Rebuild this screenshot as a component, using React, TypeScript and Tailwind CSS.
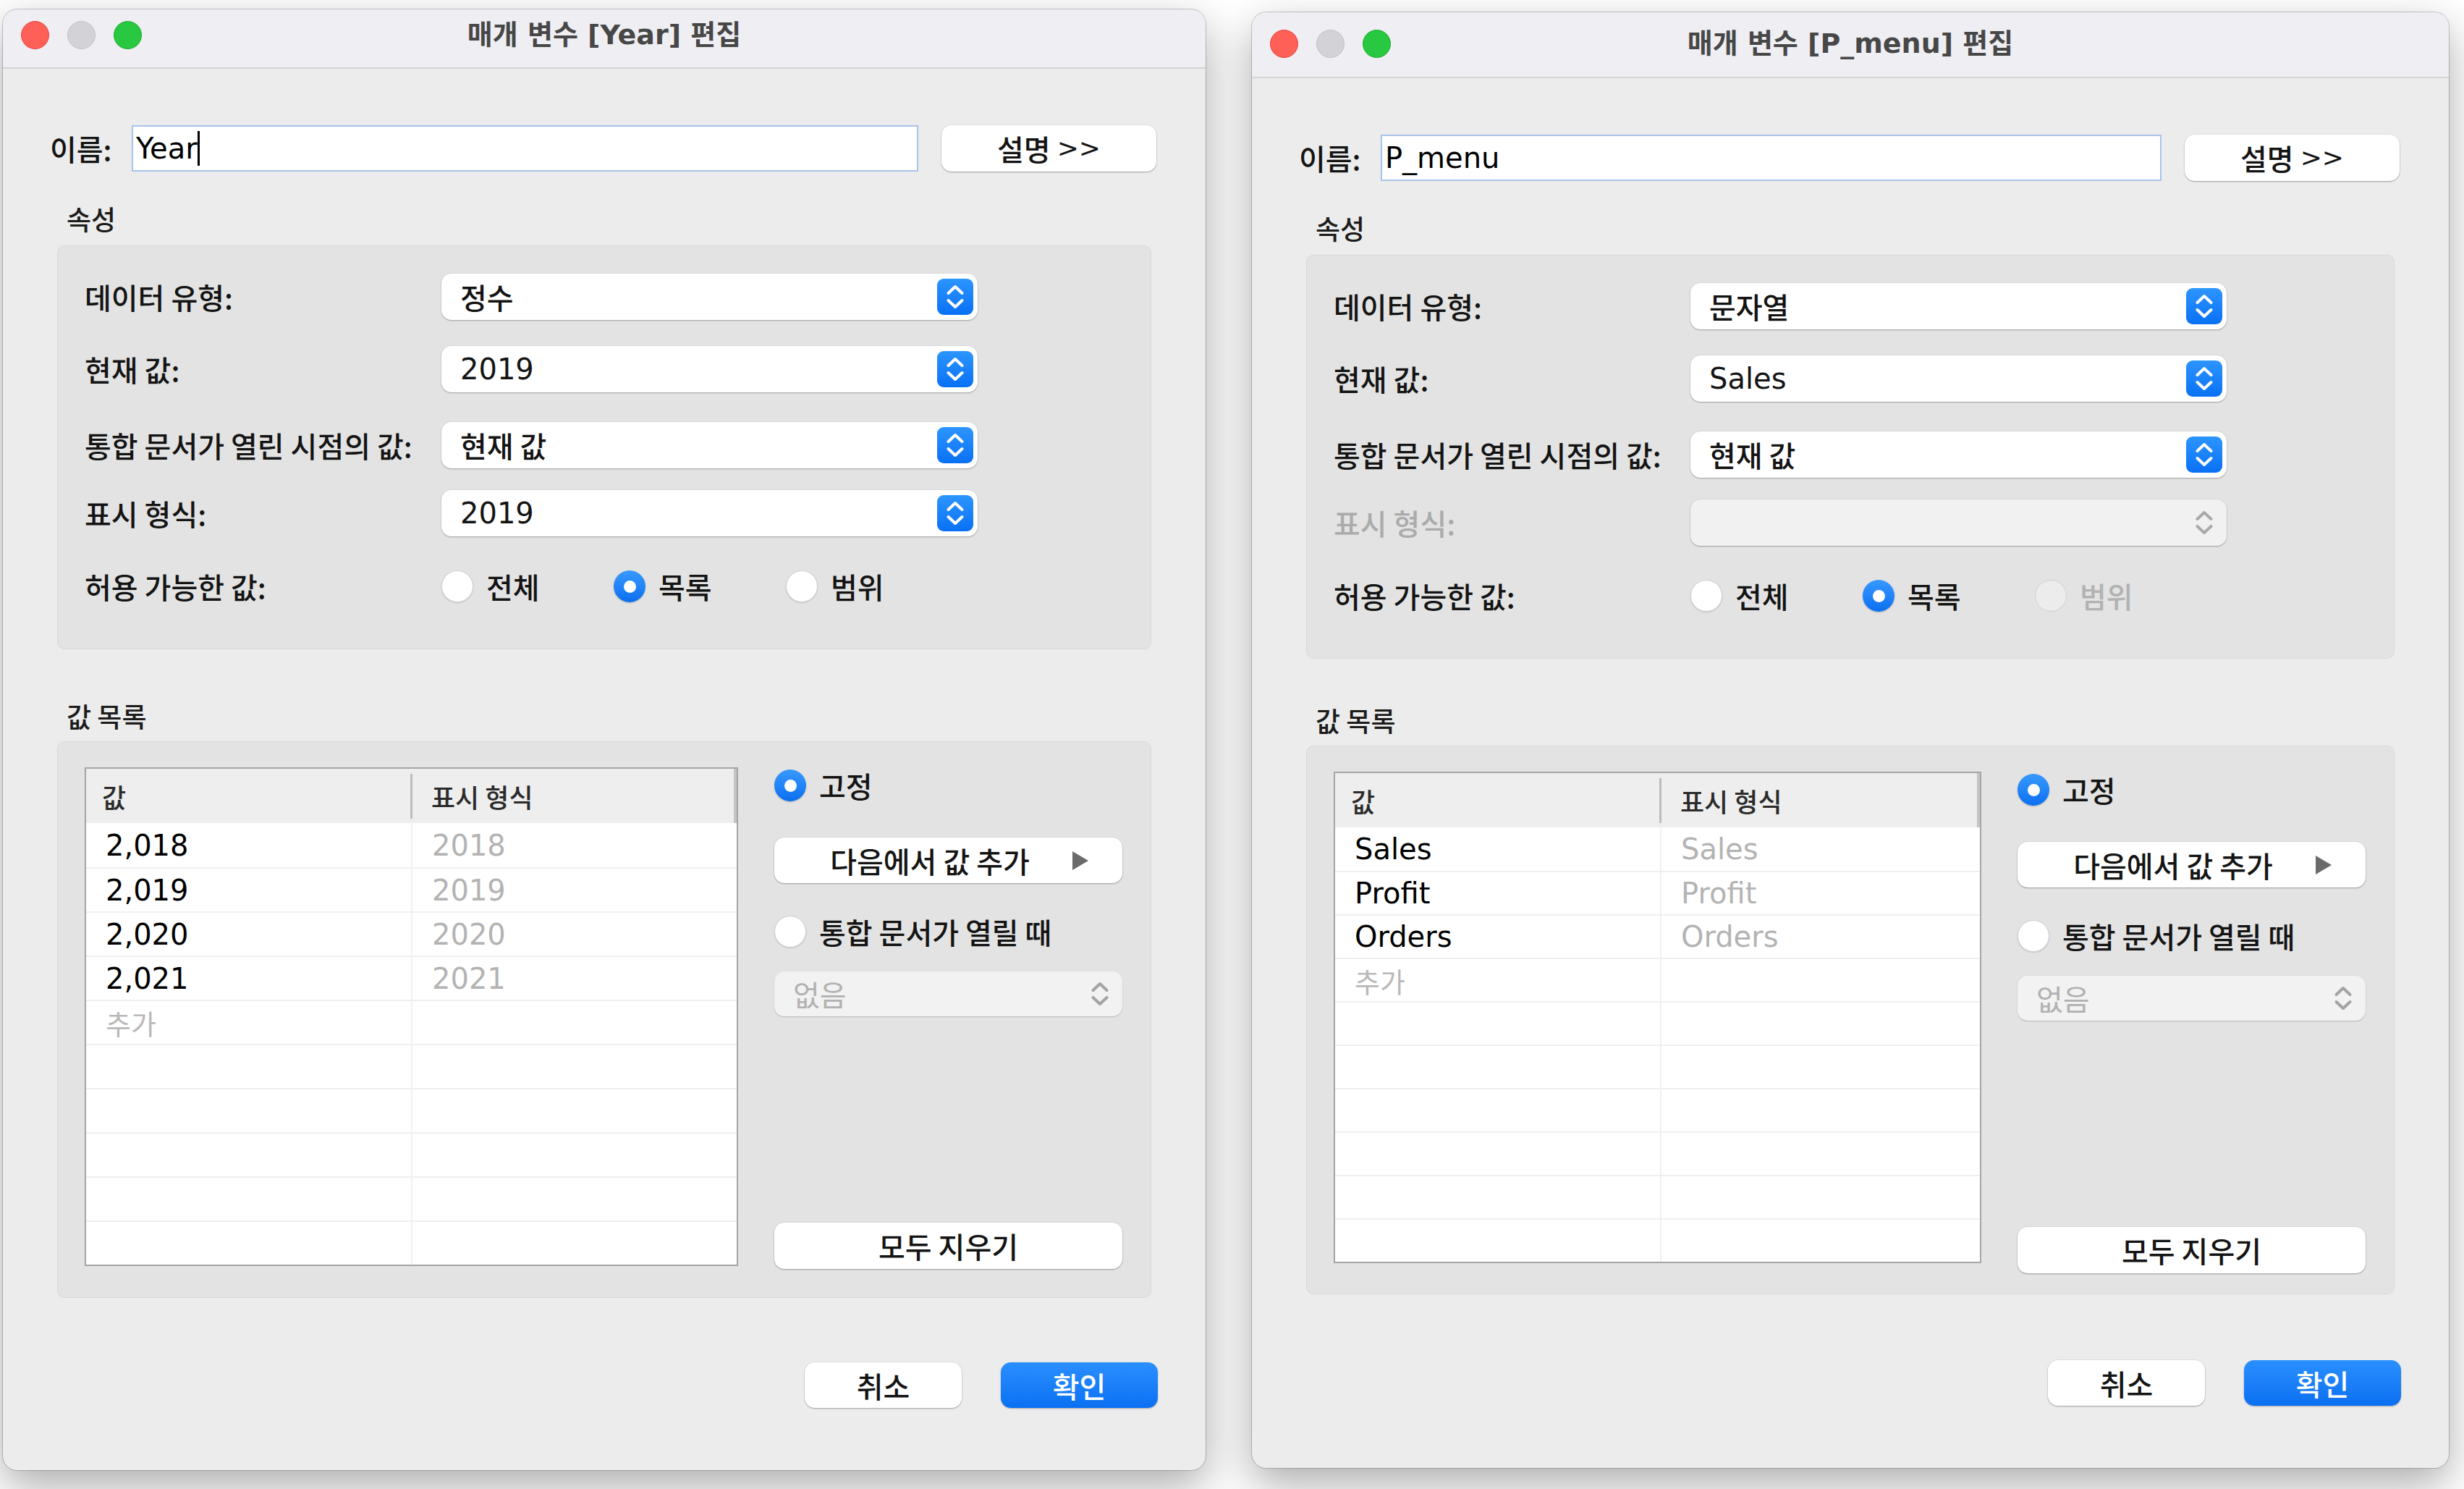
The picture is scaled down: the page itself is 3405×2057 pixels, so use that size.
import React from 'react';

const ko = "font-['Noto_Sans_CJK_KR',sans-serif]";
const en = "font-['DejaVu_Sans','Noto_Sans_CJK_KR',sans-serif]";

type DialogProps = {
  title: string;
  name: string;
  cursor?: boolean;
  dataType: string;
  current: string;
  currentLatin?: boolean;
  format?: string;
  rows: [string, string][];
  rangeDisabled?: boolean;
  winCls: string;
  titleCls: string;
  group2Cls: string;
  rowCls: string;
  listMt: string;
};

function Chevrons({ color }: { color: string }) {
  return (
    <svg width="50" height="50" viewBox="0 0 50 50">
      <path
        d="M15.5 20 L25 11 L34.5 20 M15.5 30 L25 39 L34.5 30"
        fill="none"
        stroke={color}
        strokeWidth="4"
        strokeLinecap="round"
        strokeLinejoin="round"
      />
    </svg>
  );
}

function Stepper({ disabled }: { disabled?: boolean }) {
  if (disabled) {
    return (
      <div className="w-[50px] h-[50px] mr-[6px] flex items-center justify-center">
        <Chevrons color="#a9a9a9" />
      </div>
    );
  }
  return (
    <div className="w-[50px] h-[50px] mr-[6px] rounded-[9px] bg-linear-to-b from-[#2c95ff] to-[#0870f4] flex items-center justify-center">
      <Chevrons color="#ffffff" />
    </div>
  );
}

function Select({ value, latin, disabled }: { value?: string; latin?: boolean; disabled?: boolean }) {
  return (
    <div
      className={`h-[64px] w-[741px] rounded-[14px] flex items-center justify-between pl-[26px] shadow-[0_1px_2px_rgba(0,0,0,0.28),0_0_0_1px_rgba(0,0,0,0.03)] ${
        disabled ? 'bg-[#f1f1f1]' : 'bg-white'
      }`}
    >
      <span className={`${latin ? `${en} text-[40px]` : `${ko} text-[40px] font-medium`} text-[#141414] leading-none`}>{value}</span>
      <Stepper disabled={disabled} />
    </div>
  );
}

function Radio({ checked, disabled }: { checked?: boolean; disabled?: boolean }) {
  if (checked) {
    return (
      <div className="w-[44px] h-[44px] shrink-0 rounded-full bg-linear-to-b from-[#3799ff] to-[#0a6ff0] flex items-center justify-center shadow-[0_1px_2px_rgba(0,0,0,0.25)]">
        <div className="w-[17px] h-[17px] rounded-full bg-white" />
      </div>
    );
  }
  return (
    <div
      className={`w-[44px] h-[44px] shrink-0 rounded-full border border-[#d2d2d2] ${
        disabled ? 'bg-[#ececec]' : 'bg-white shadow-[0_1px_2px_rgba(0,0,0,0.15)]'
      }`}
    />
  );
}

function Btn({ children, className = '' }: { children: React.ReactNode; className?: string }) {
  return (
    <div
      className={`rounded-[14px] bg-white shadow-[0_1px_2px_rgba(0,0,0,0.3),0_0_0_1px_rgba(0,0,0,0.04)] flex items-center ${ko} text-[40px] font-medium text-[#141414] ${className}`}
    >
      {children}
    </div>
  );
}

function Option({ label, checked, disabled }: { label: string; checked?: boolean; disabled?: boolean }) {
  return (
    <div className="w-[238px] flex items-center gap-[18px]">
      <Radio checked={checked} disabled={disabled} />
      <span className={`${ko} text-[40px] font-medium ${disabled ? 'text-[#b2b2b2]' : 'text-[#141414]'}`}>{label}</span>
    </div>
  );
}

function Dialog(p: DialogProps) {
  const body = [...p.rows.map((r) => ({ v: r[0], f: r[1], add: false })), { v: '추가', f: '', add: true }];
  while (body.length < 10) body.push({ v: '', f: '', add: false });

  const label = `${ko} text-[40px] font-medium text-[#141414] w-[493px] shrink-0`;

  return (
    <div
      className={`${p.winCls} shrink-0 rounded-[20px] bg-[#ececec] flex flex-col overflow-hidden shadow-[0_22px_60px_rgba(0,0,0,0.33),0_0_0_1px_rgba(0,0,0,0.2)]`}
    >
      {/* title bar */}
      <div className={`${p.titleCls} shrink-0 bg-[#efeef3] border-b-2 border-[#d3d3d6] grid grid-cols-[1fr_auto_1fr] items-center`}>
        <div className="flex items-center gap-[25px] pl-[25px]">
          <div className="w-[39px] h-[39px] rounded-full bg-[#fe5f57] border border-[#e1443e]" />
          <div className="w-[39px] h-[39px] rounded-full bg-[#d3d2d7] border border-[#c2c1c6]" />
          <div className="w-[39px] h-[39px] rounded-full bg-[#28c840] border border-[#1eab2c]" />
        </div>
        <span className={`${en} font-bold text-[38px] text-[#474747]`}>{p.title}</span>
        <div />
      </div>

      <div className="flex-1 flex flex-col pb-[86px]">
        {/* name row */}
        <div className="flex items-center h-[64px] mt-[78px] ml-[65px] mr-[68px]">
          <span className={`${ko} text-[40px] font-medium text-[#141414] w-[113px] shrink-0`}>이름:</span>
          <div className="flex-1 h-full bg-white border-2 border-[#a8c3ec] flex items-center pl-[4px]">
            <span className={`${en} text-[40px] text-black`}>{p.name}</span>
            {p.cursor && <span className="w-[3px] h-[48px] bg-black" />}
          </div>
          <Btn className="w-[297px] h-[64px] ml-[32px] justify-center shrink-0">
            설명&nbsp;<span className={`${en} text-[36px]`}>&gt;&gt;</span>
          </Btn>
        </div>

        {/* properties */}
        <div className={`mt-[48px] h-[36px] ml-[88px] flex items-center ${ko} text-[37px] font-medium text-[#1c1c1c]`}>속성</div>
        <div className="mt-[18px] mx-[75px] rounded-[10px] bg-[#e3e3e3] border border-[#d9d9d9] flex flex-col pl-[37px] pt-[38px] pb-[54px]">
          <div className="flex items-center h-[64px]">
            <span className={label}>데이터 유형:</span>
            <Select value={p.dataType} />
          </div>
          <div className="flex items-center h-[64px] mt-[36px]">
            <span className={label}>현재 값:</span>
            <Select value={p.current} latin={p.currentLatin} />
          </div>
          <div className="flex items-center h-[64px] mt-[41px]">
            <span className={label}>통합 문서가 열린 시점의 값:</span>
            <Select value="현재 값" />
          </div>
          <div className="flex items-center h-[64px] mt-[30px]">
            <span className={`${ko} text-[40px] font-medium w-[493px] shrink-0 ${p.format ? 'text-[#141414]' : 'text-[#ababab]'}`}>
              표시 형식:
            </span>
            <Select value={p.format} latin disabled={!p.format} />
          </div>
          <div className="flex items-center h-[64px] mt-[37px]">
            <span className={label}>허용 가능한 값:</span>
            <Option label="전체" />
            <Option label="목록" checked />
            <Option label="범위" disabled={p.rangeDisabled} />
          </div>
        </div>

        {/* value list */}
        <div className={`${p.listMt} h-[36px] ml-[88px] flex items-center ${ko} text-[37px] font-medium text-[#1c1c1c]`}>값 목록</div>
        <div className={`${p.group2Cls} mt-[16px] mx-[75px] rounded-[10px] bg-[#e3e3e3] border border-[#d9d9d9] flex items-start pl-[37px] pr-[39px]`}>
          <div className="flex-1 mt-[35px] border-2 border-[#a5a5a5] bg-white flex flex-col">
            <div className="h-[75px] bg-[#eeeeee] flex items-center">
              <div className={`w-[448px] pl-[22px] ${ko} text-[36px] font-medium text-[#2b2b2b]`}>값</div>
              <div className="w-[3px] h-[62px] bg-[#bcbcbc]" />
              <div className={`flex-1 pl-[26px] ${ko} text-[36px] font-medium text-[#2b2b2b]`}>표시 형식</div>
              <div className="w-[4px] h-full bg-[#c4c4c4]" />
            </div>
            {body.map((r, i) => (
              <div key={i} className={`${p.rowCls} flex ${i > 0 ? 'border-t-2 border-[#efefef]' : ''}`}>
                <div className="w-[451px] border-r-2 border-[#f0f0f0] pl-[27px] flex items-center">
                  <span className={r.add ? `${ko} text-[38px] text-[#b9b9b9]` : `${en} text-[40px] text-black`}>{r.v}</span>
                </div>
                <div className="flex-1 pl-[27px] flex items-center">
                  <span className={`${en} text-[40px] text-[#b3b3b3]`}>{r.f}</span>
                </div>
              </div>
            ))}
          </div>

          <div className="w-[481px] ml-[50px] flex flex-col">
            <div className="mt-[38px] h-[44px] flex items-center gap-[18px]">
              <Radio checked />
              <span className={`${ko} text-[40px] font-medium text-[#141414]`}>고정</span>
            </div>
            <Btn className="mt-[50px] h-[63px] pl-[19px] pr-[46px]">
              <span className="flex-1 text-center">다음에서 값 추가</span>
              <svg width="24" height="28" viewBox="0 0 24 28">
                <path d="M1 1 L23 14 L1 27 Z" fill="#6b6b6b" />
              </svg>
            </Btn>
            <div className="mt-[45px] h-[44px] flex items-center gap-[18px]">
              <Radio />
              <span className={`${ko} text-[40px] font-medium text-[#141414]`}>통합 문서가 열릴 때</span>
            </div>
            <div className="mt-[33px] h-[62px] rounded-[14px] bg-[#f2f2f2] shadow-[0_1px_2px_rgba(0,0,0,0.2)] flex items-center justify-between pl-[26px]">
              <span className={`${ko} text-[40px] text-[#b1b1b1]`}>없음</span>
              <div className="w-[50px] h-[50px] mr-[6px] flex items-center justify-center">
                <Chevrons color="#a3a3a3" />
              </div>
            </div>
            <Btn className="mt-[285px] h-[64px] justify-center">모두 지우기</Btn>
          </div>
        </div>

        {/* footer buttons */}
        <div className="mt-auto flex justify-end gap-[54px] mr-[66px]">
          <Btn className="w-[217px] h-[63px] justify-center">취소</Btn>
          <div
            className={`w-[217px] h-[63px] rounded-[14px] bg-linear-to-b from-[#2a8fff] to-[#0a70f2] shadow-[0_1px_2px_rgba(0,0,0,0.3)] flex items-center justify-center ${ko} text-[40px] font-medium text-white`}
          >
            확인
          </div>
        </div>
      </div>
    </div>
  );
}

export default function App() {
  return (
    <div className="w-[3405px] h-[2057px] bg-white overflow-hidden flex items-start gap-[64px] pl-[4px]">
      <Dialog
        title="매개 변수 [Year] 편집"
        name="Year"
        cursor
        dataType="정수"
        current="2019"
        currentLatin
        format="2019"
        rows={[
          ['2,018', '2018'],
          ['2,019', '2019'],
          ['2,020', '2020'],
          ['2,021', '2021'],
        ]}
        winCls="w-[1662px] h-[2018px] mt-[13px]"
        titleCls="h-[82px] pb-[10px]"
        group2Cls="h-[769px]"
        rowCls="h-[61px]"
        listMt="mt-[75px]"
      />
      <Dialog
        title="매개 변수 [P_menu] 편집"
        name="P_menu"
        dataType="문자열"
        current="Sales"
        currentLatin
        rows={[
          ['Sales', 'Sales'],
          ['Profit', 'Profit'],
          ['Orders', 'Orders'],
        ]}
        rangeDisabled
        winCls="w-[1654px] h-[2011px] mt-[17px]"
        titleCls="h-[91px] pb-[2px]"
        group2Cls="h-[758px]"
        rowCls="h-[60px]"
        listMt="mt-[68px]"
      />
    </div>
  );
}
